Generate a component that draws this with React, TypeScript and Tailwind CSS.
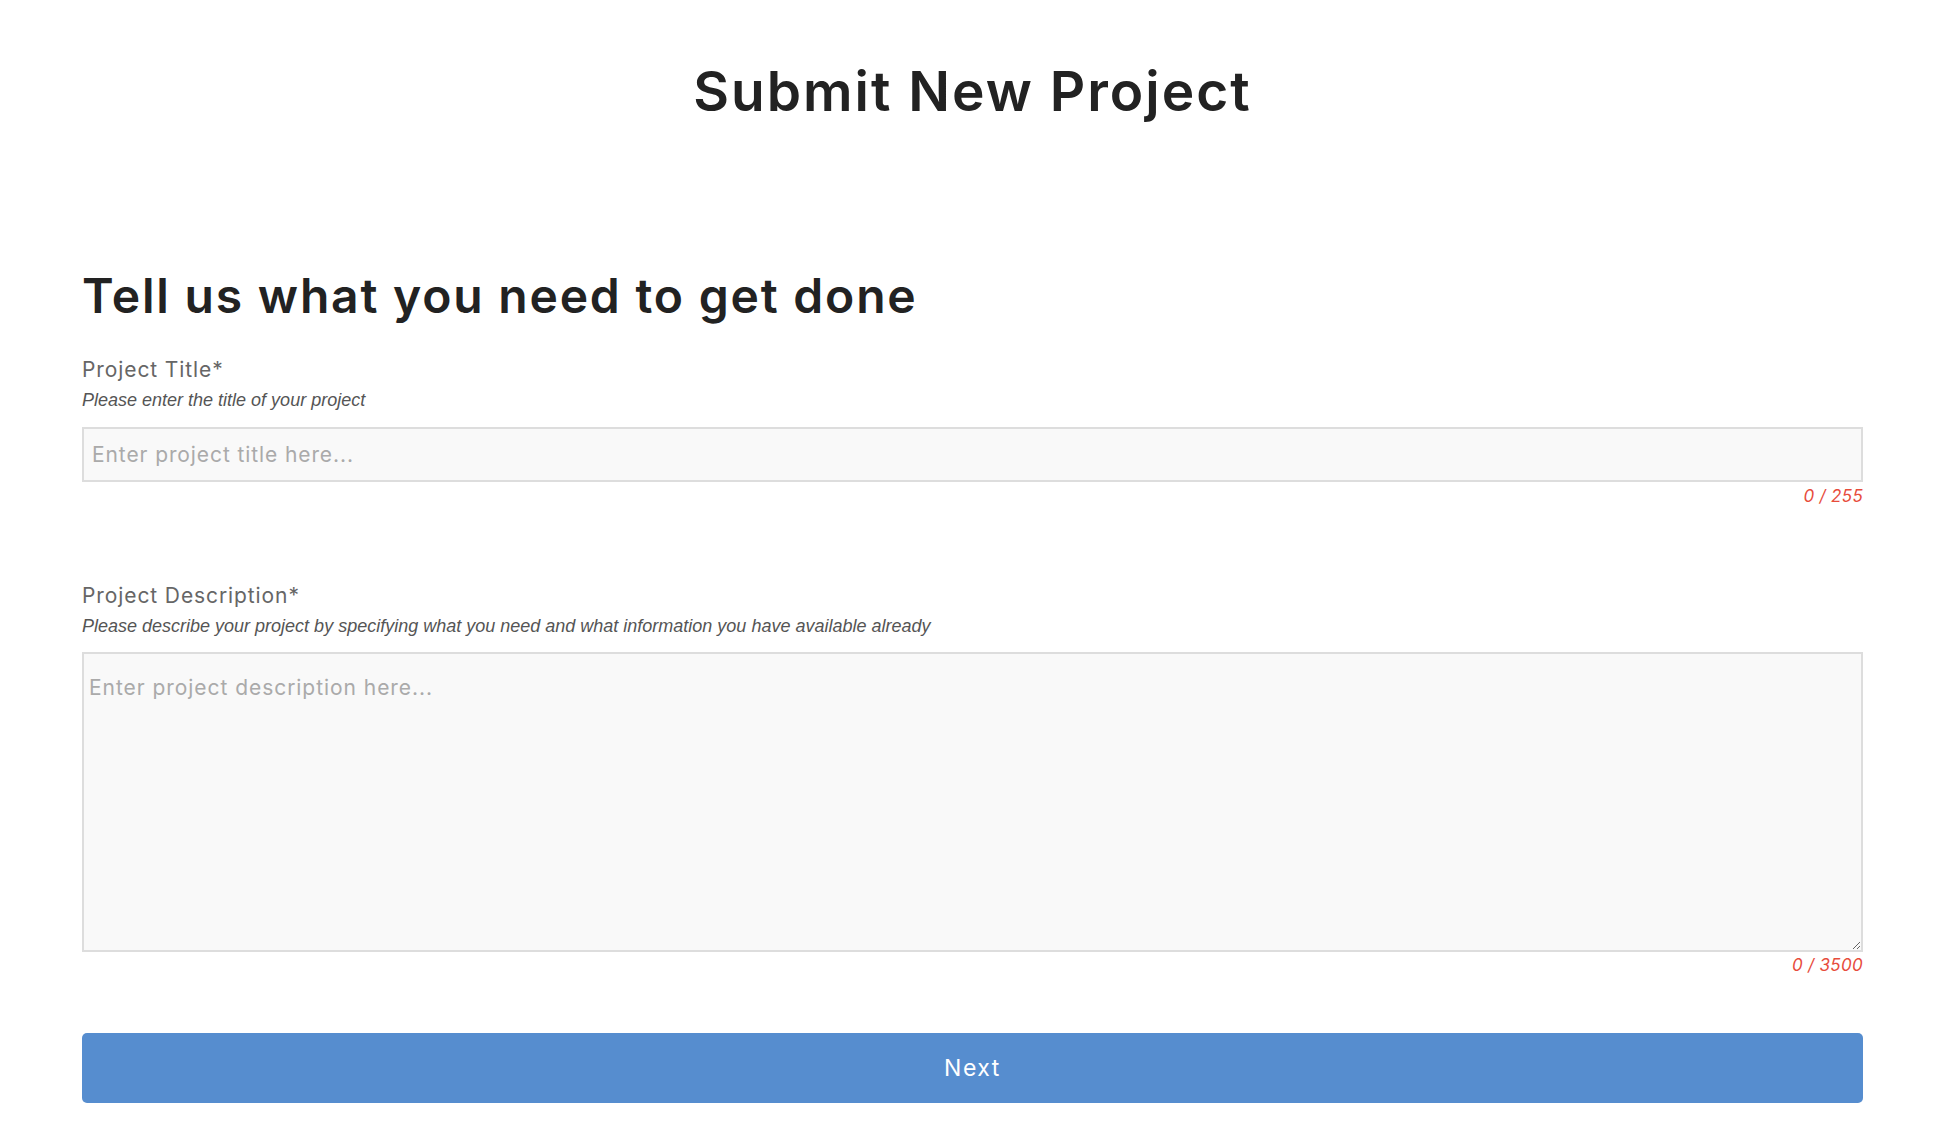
import type { FC } from 'react';

const App: FC = () => {
    return (
        <div className="min-h-screen bg-white pl-[82px] pr-[87px] pt-[63px] font-['Inter','Liberation_Sans',sans-serif]">
            <h1 className="text-center text-[55px] leading-[56px] font-semibold text-[#222] tracking-[2px]">
                Submit New Project
            </h1>

            <h2 className="mt-[149px] text-[48px] leading-[56px] font-semibold text-[#222] tracking-[1.8px]">
                Tell us what you need to get done
            </h2>

            <label className="block mt-[32px] text-[21px] leading-[28px] text-[#666] tracking-[0.9px]">
                Project Title*
            </label>
            <p className="mt-[4px] text-[18px] leading-[24px] italic text-[#555] font-['Liberation_Sans',sans-serif]">
                Please enter the title of your project
            </p>
            <input
                type="text"
                placeholder="Enter project title here..."
                className="mt-[15px] block w-full h-[55px] border-2 border-[#dddddd] bg-[#f9f9f9] px-[8px] text-[21px] tracking-[0.9px] text-[#333] placeholder:text-[#aaaaaa] outline-none"
            />
            <p className="mt-[4px] text-right text-[17px] leading-[20px] italic tracking-[0.3px] text-[#e74c3c]">
                0 / 255
            </p>

            <label className="block mt-[76px] text-[21px] leading-[28px] text-[#666] tracking-[0.9px]">
                Project Description*
            </label>
            <p className="mt-[4px] text-[18px] leading-[24px] italic text-[#555] font-['Liberation_Sans',sans-serif]">
                Please describe your project by specifying what you need and what information you have available already
            </p>
            <textarea
                placeholder="Enter project description here..."
                className="mt-[14px] block w-full h-[300px] border-2 border-[#dddddd] bg-[#f9f9f9] px-[5px] pt-[20px] text-[21px] leading-[28px] tracking-[0.95px] text-[#333] placeholder:text-[#aaaaaa] outline-none"
            />
            <p className="mt-[3px] text-right text-[17px] leading-[20px] italic tracking-[0.3px] text-[#e74c3c]">
                0 / 3500
            </p>

            <button className="mt-[58px] block w-full h-[70px] rounded-[5px] bg-[#568dcf] text-white text-[23px] tracking-[1.5px]">
                Next
            </button>
        </div>
    );
}
export default App;
